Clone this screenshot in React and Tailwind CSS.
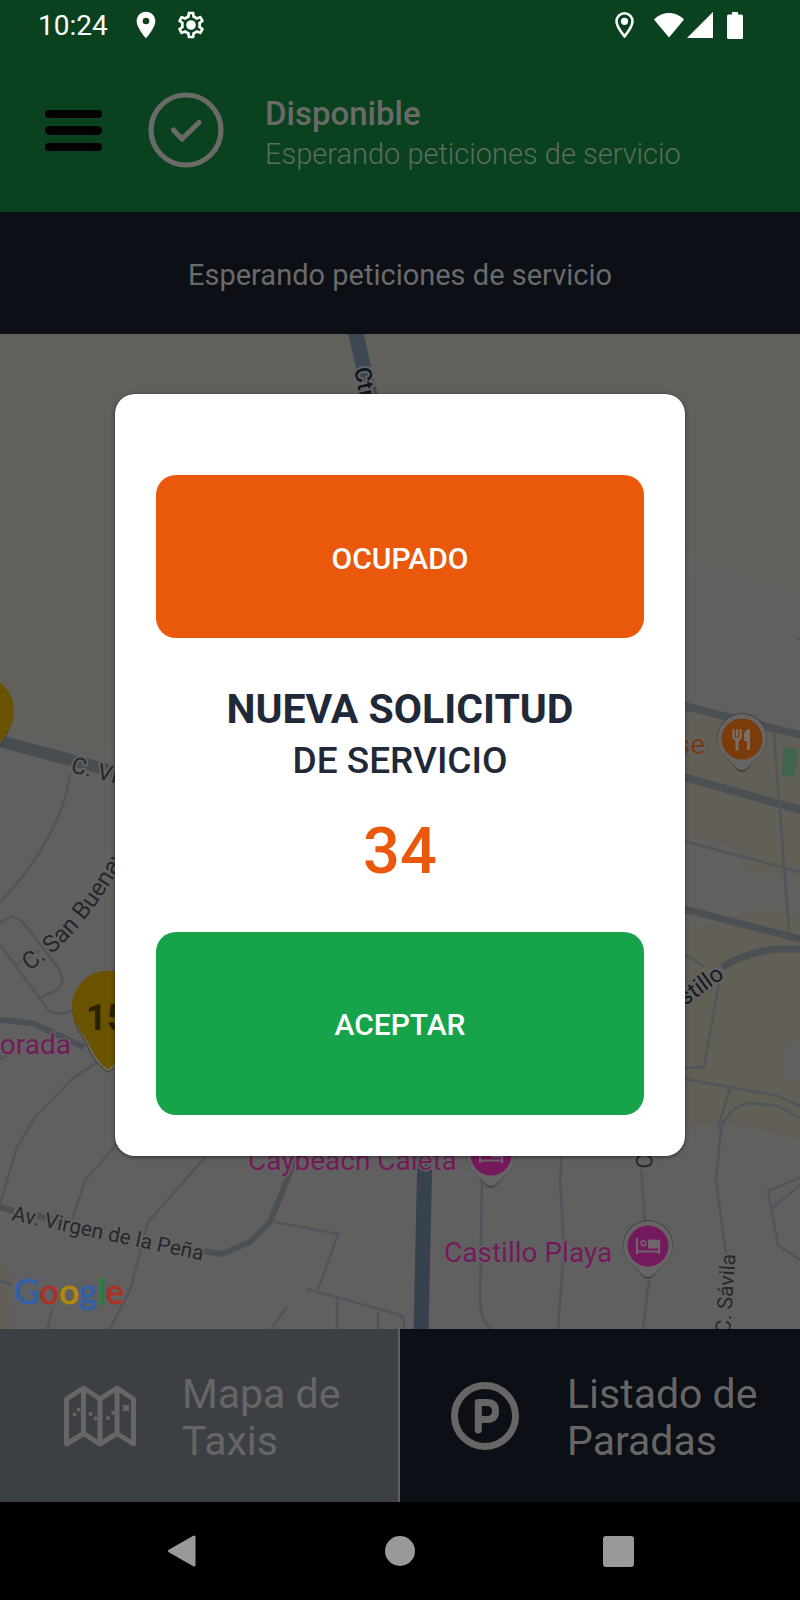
import React from "react";
import { MdLocationOn } from "react-icons/md";

const FONT = "Roboto, 'Noto Sans', sans-serif";

function StatusBar() {
  return (
    <div className="flex h-[50px] items-center justify-between pl-[38px] pr-[57px] text-white">
      <div className="flex items-center">
        <span className="pt-[2px] text-[28px] leading-8">10:24</span>
        <MdLocationOn className="ml-[22px] size-8" aria-hidden="true" />
        <svg viewBox="0 0 24 24" className="ml-[13px] size-8 fill-white" aria-hidden="true">
          <path d="M19.43 12.98c.04-.32.07-.64.07-.98 0-.34-.03-.66-.07-.98l2.11-1.65c.19-.15.24-.42.12-.64l-2-3.46c-.09-.16-.26-.25-.44-.25-.06 0-.12.01-.17.03l-2.49 1c-.52-.4-1.08-.73-1.69-.98l-.38-2.65C14.46 2.18 14.25 2 14 2h-4c-.25 0-.46.18-.49.42l-.38 2.65c-.61.25-1.17.59-1.69.98l-2.49-1c-.06-.02-.12-.03-.18-.03-.17 0-.34.09-.43.25l-2 3.46c-.13.22-.07.49.12.64l2.11 1.65c-.04.32-.07.65-.07.98 0 .33.03.66.07.98l-2.11 1.65c-.19.15-.24.42-.12.64l2 3.46c.09.16.26.25.44.25.06 0 .12-.01.17-.03l2.49-1c.52.4 1.08.73 1.69.98l.38 2.65c.03.24.24.42.49.42h4c.25 0 .46-.18.49-.42l.38-2.65c.61-.25 1.17-.59 1.69-.98l2.49 1c.06.02.12.03.18.03.17 0 .34-.09.43-.25l2-3.46c.12-.22.07-.49-.12-.64l-2.11-1.65zm-1.98-1.71c.04.31.05.52.05.73 0 .21-.02.43-.05.73l-.14 1.13.89.7 1.08.84-.7 1.21-1.27-.51-1.04-.42-.9.68c-.43.32-.84.56-1.25.73l-1.06.43-.16 1.13-.2 1.35h-1.4l-.19-1.35-.16-1.13-1.06-.43c-.43-.18-.83-.41-1.23-.71l-.91-.7-1.06.43-1.27.51-.7-1.21 1.08-.84.89-.7-.14-1.13c-.03-.31-.05-.54-.05-.74s.02-.43.05-.73l.14-1.13-.89-.7-1.08-.84.7-1.21 1.27.51 1.04.42.9-.68c.43-.32.84-.56 1.25-.73l1.06-.43.16-1.13.2-1.35h1.39l.19 1.35.16 1.13 1.06.43c.43.18.83.41 1.23.71l.91.7 1.06-.43 1.27-.51.7 1.21-1.07.85-.89.7.14 1.13z" />
          <circle cx="12" cy="12" r="3.6" />
        </svg>
      </div>
      <div className="flex items-center" aria-hidden="true">
        <svg viewBox="0 0 19 26" className="h-[26px] w-[19px]">
          <path d="M9.500 1.300a8 8 0 0 0-8 8c0 5.500 8 15 8 15s8-9.500 8-15a8 8 0 0 0-8-8z" fill="none" stroke="#fff" strokeWidth="2.600" />
          <circle cx="9.500" cy="9.300" r="3.600" fill="#fff" />
        </svg>
        <svg viewBox="0 0 30 26" className="ml-5 h-[26px] w-[30px]">
          <path d="M15 25.500L0 7.500C4 3.500 9 1 15 1s11 2.500 15 6.500z" fill="#fff" />
        </svg>
        <svg viewBox="0 0 26 26" className="ml-[3px] h-[26px] w-[26px]">
          <path d="M0 26L26 0v26z" fill="#fff" />
        </svg>
        <svg viewBox="0 0 16 27" className="ml-[14px] h-[27px] w-4">
          <path d="M5 0h6v2.500h3.500q1.500 0 1.500 1.500v21.500q0 1.500-1.500 1.500h-13Q0 27 0 25.500V4q0-1.500 1.500-1.500H5z" fill="#fff" />
        </svg>
      </div>
    </div>
  );
}

function Header() {
  return (
    <header className="bg-[#0a411e]">
      <StatusBar />
      <div className="flex h-[162px] items-center pb-[2px] pl-[45px] text-[#6a6b68]">
        <button type="button" aria-label="Menú" className="flex w-[57px] flex-col gap-2">
          <span className="h-[8px] rounded-full bg-black" />
          <span className="h-[9px] rounded-full bg-black" />
          <span className="h-[8px] rounded-full bg-black" />
        </button>
        <svg viewBox="0 0 76 76" className="ml-[46px] size-[76px]" fill="none" stroke="#6a6b68" strokeWidth="5.200" aria-hidden="true">
          <circle cx="38" cy="38" r="35" />
          <path d="M25.500 38l8.500 9 17-16.500" strokeLinecap="round" strokeLinejoin="round" />
        </svg>
        <div className="ml-[41px] pt-2">
          <h1 className="text-[33px] font-medium leading-10">Disponible</h1>
          <p className="text-[29px] font-light leading-10 text-[#5b6d5f]">Esperando peticiones de servicio</p>
        </div>
      </div>
    </header>
  );
}

function PlacePin({ x, y, color, children }) {
  return (
    <g transform={`translate(${x} ${y})`}>
      <path d="M0 33c-4 0-6-3-9-7l-11-12a25 25 0 1 1 40 0L9 26c-3 4-5 7-9 7z" fill="#2e2e2e" opacity=".6" />
      <path d="M0 31c-4 0-6-3-9-6l-10-10a24.500 24.500 0 1 1 38 0L9 25c-3 3-5 6-9 6z" fill="#666564" />
      <circle r="20.500" fill={color} />
      {children}
    </g>
  );
}

function Bed() {
  return (
    <g fill="#6f656d">
      <path d="M-12-8h2V4.500H10V-6.500h2.200V8H10V6.500H-10V8h-2z" />
      <circle cx="-4.500" cy="-2.800" r="2.400" fill="none" stroke="#6f656d" strokeWidth="1.600" />
      <path d="M0-6.500h6q5 0 5 5v4H0z" />
    </g>
  );
}

function TaxiPin({ x, y }) {
  return (
    <g transform={`translate(${x} ${y})`}>
      <path d="M0 65c-9-5-16-15-21-27-5-10-14-19-14-37h70c0 18-9 27-14 37-5 12-12 22-21 27z" fill="#6e6a55" stroke="#3c3a34" />
      <path d="M0 62c-8-5-14-14-19-25-5-10-17-19-17-37a36.500 36.500 0 1 1 73 0c0 18-12 27-17 37-5 11-12 20-20 25z" fill="#6a5300" />
    </g>
  );
}

function MapView() {
  return (
    <svg viewBox="0 334 800 995" preserveAspectRatio="xMidYMid slice" className="absolute inset-0 size-full" role="img" aria-label="Mapa" fontFamily={FONT}>
      <defs>
        <filter id="soft" x="-20%" y="-20%" width="140%" height="140%">
          <feGaussianBlur stdDeviation="6" />
        </filter>
        <path id="buenav" d="M29 971Q82 938 130 850" />
      </defs>
      <rect y="334" width="800" height="995" fill="#62605b" />
      <g filter="url(#soft)">
        <path d="M-40 722L115 755 400 640 640 550 690 561 840 603V1370H-40z" fill="#616161" />
        <path d="M680 708L840 750V1150L740 1126H680z" fill="#625f57" />
        <path d="M680 835L742 850 744 872 850 880V922L760 908 680 930z" fill="#616161" />
        <circle cx="803" cy="1062" r="20" fill="#616164" />
      </g>
      <path d="M0 1265h12v64H0z" fill="#625f59" />

      <g fill="none" stroke="#4b5055" strokeLinejoin="round">
        <path d="M355 330L372 404" stroke="#3c4752" strokeWidth="15" />
        <path d="M425 1150L421 1332" stroke="#36424e" strokeWidth="15" />
        <path d="M-5 740L120 773" stroke="#484d51" strokeWidth="12" />
        <path d="M0 1020L32 1023 84 1047M-4 1206L14 1211M36 1215L60 1222M202 1251L222 1254 250 1242 270 1222 295 1160" strokeWidth="6" />
        <path d="M680 705L804 736M680 776L804 811" strokeWidth="8" />
        <path d="M680 908L804 940M804 949H775Q745 953 722 967" strokeWidth="7" />
      </g>
      <g fill="none" stroke="#50545b" strokeWidth="2.500" strokeLinejoin="round">
        <path d="M70 774C64 822 30 872 0 902" />
        <path d="M0 923L12 916 22 921 60 970 63 982 57 990 40 998M0 945L50 1012 62 1014 72 1010M15 966L40 950" />
        <path d="M98 1062L73 1078 36 1116 17 1147 0 1204M120 1141L85 1180 72 1220M208 1154L148 1222 130 1290 110 1329M75 1078L96 1063M0 1059L14 1052" />
        <path d="M270 1221L338 1234 318 1290M307 1289L404 1316M337 1299V1329M378 1312V1329M271 1329L287 1307M52 1310L47 1329M0 1281L12 1285M398 1315L404 1319V1329" />
        <path d="M482 1180L480 1300Q480 1322 492 1329M562 1150L560 1180 564 1250 558 1329M641 1168L645 1222M649 1280L643 1329" />
        <path d="M718 1128L730 1088M726 1255L716 1180 721 1128Q730 1106 750 1103L778 1106 804 1120M680 1078L778 1096 804 1108" />
        <path d="M804 1176L768 1191 778 1245 804 1262M772 1208L804 1182" />
        <path d="M680 840L804 873M774 732L789 931M685 954L705 967M719 982L704 1067 685 1068M796 639h6" />
      </g>
      <path d="M784 747L798 749 795 777 781 776z" fill="#3f6450" />

      <g fontSize="23" fill="#25282d" stroke="#626262" strokeWidth="4" paintOrder="stroke" strokeLinejoin="round">
        <text transform="translate(354 369) rotate(78)" fill="#11161f" fontWeight="500">Ctra.</text>
        <text transform="translate(70 772) rotate(14)">C. Virgen</text>
        <text fontSize="24"><textPath href="#buenav">C. San Buenav</textPath></text>
        <text transform="translate(11 1220) rotate(12)" fontSize="21">Av. Virgen de la Peña</text>
        <text transform="translate(725 977) rotate(-36)" textAnchor="end" fill="#151a20">Castillo</text>
        <text transform="translate(652 1169) rotate(-88)">C.</text>
        <text transform="translate(730 1334) rotate(-86)" fontSize="21">C. Sávila</text>
      </g>

      <TaxiPin x={-23} y={711} />
      <TaxiPin x={108} y={1007} />
      <text x="86" y="1030" fontSize="36" fontWeight="700" fill="#2b2200">15</text>

      <g fontSize="28" fill="#741a5c" stroke="#626262" strokeWidth="3" paintOrder="stroke">
        <text x="71" y="1054" textAnchor="end">orada</text>
        <text x="248" y="1170">Caybeach Caleta</text>
        <text x="444" y="1262">Castillo Playa</text>
        <text x="705" y="754" textAnchor="end" fill="#7a3a10">se</text>
      </g>
      <PlacePin x={491} y={1155} color="#741a5c"><Bed /></PlacePin>
      <PlacePin x={648} y={1246} color="#741a5c"><Bed /></PlacePin>
      <PlacePin x={742} y={739} color="#7c3b0b">
        <g fill="none" stroke="#77706a" strokeWidth="2.200" strokeLinecap="round">
          <path d="M-8.500-9V-3M-5-9V-3M-1.500-9V-3" />
          <path d="M-8.500-3Q-8.500 1-5 1T-1.500-3" />
          <path d="M-5 0V10" strokeWidth="3" />
        </g>
        <path d="M8-10V11H5V2H2V-4Q2-9 8-10z" fill="#77706a" />
      </PlacePin>

      <text x="14" y="1304" fontFamily="Lato, sans-serif" fontWeight="400" fontSize="35" strokeWidth="1" paintOrder="stroke">
        <tspan fill="#3360a8" stroke="#3360a8">G</tspan>
        <tspan fill="#a83228" stroke="#a83228">o</tspan>
        <tspan fill="#b08a0c" stroke="#b08a0c">o</tspan>
        <tspan fill="#3360a8" stroke="#3360a8">g</tspan>
        <tspan fill="#26803c" stroke="#26803c">l</tspan>
        <tspan fill="#a83228" stroke="#a83228">e</tspan>
      </text>
    </svg>
  );
}

function BottomTabs() {
  return (
    <div className="grid h-[173px] grid-cols-2 text-[41px] leading-[47px] text-[#666]">
      <button type="button" className="flex items-center border-r-2 border-[#5c5e60] bg-[#3c4045] pl-16 text-left">
        <svg viewBox="0 0 72 62" className="h-[62px] w-[72px] shrink-0" fill="none" stroke="#666" strokeWidth="5" strokeLinejoin="round" aria-hidden="true">
          <path d="M2.500 14L19.500 3 36 14 53 3 69.500 14V59L53 48.500 36 59 19.500 48.500 2.500 59zM19.500 3V48.500M36 14V59M53 3V48.500" />
          <path d="M10.500 29.500h.1M14.500 24.500h.1M26.500 29h.1M31.500 33.500h.1M44 33h.1M49 28h.1" strokeWidth="4" strokeLinecap="round" />
          <path d="M59 23h6" strokeWidth="6" />
        </svg>
        <span className="ml-[46px] w-44 pt-1">Mapa de Taxis</span>
      </button>
      <button type="button" className="flex items-center bg-[#0c0f15] pl-[51px] text-left">
        <svg viewBox="0 0 68 68" className="size-[68px] shrink-0" fill="none" stroke="#666" strokeWidth="7" aria-hidden="true">
          <circle cx="34" cy="34" r="30.500" />
          <path d="M27.300 48V20.500H36Q44.500 20.500 44.500 29T36 37.500H27.300" strokeLinecap="round" strokeLinejoin="round" />
        </svg>
        <span className="ml-[48px] w-52 pt-1">Listado de Paradas</span>
      </button>
    </div>
  );
}

function SystemNav() {
  return (
    <nav className="flex h-[98px] items-center justify-center gap-[188px] bg-black">
      <button type="button" aria-label="Atrás">
        <svg viewBox="0 0 30 34" className="h-[34px] w-[30px]" aria-hidden="true">
          <path d="M2.500 17L27 3v28z" fill="#999" stroke="#999" strokeWidth="3" strokeLinejoin="round" />
        </svg>
      </button>
      <button type="button" aria-label="Inicio" className="size-[30px] rounded-full bg-[#999]" />
      <button type="button" aria-label="Recientes" className="size-[31px] rounded-[3px] bg-[#999]" />
    </nav>
  );
}

function RequestDialog() {
  return (
    <div className="absolute inset-0 flex items-center justify-center pb-[50px]">
      <section
        role="dialog"
        aria-modal="true"
        aria-labelledby="request-title"
        className="flex w-full max-w-[570px] flex-col rounded-[20px] bg-white px-[41px] pb-[41px] pt-[81px] text-center text-[#1f2937] shadow-[0_1px_4px_rgba(0,0,0,0.5)]"
      >
        <button type="button" className="h-[163px] rounded-[20px] bg-[#ea580c] pt-1 text-[30px] font-medium text-white">OCUPADO</button>
        <h2 id="request-title" className="mt-[45px]">
          <span className="block text-[41px] font-bold leading-[52px]">NUEVA SOLICITUD</span>
          <span className="block text-[37px] font-medium leading-[52px]">DE SERVICIO</span>
        </h2>
        <p className="mt-7 text-[65px] font-medium leading-[72px] text-[#ea580c]">34</p>
        <button type="button" className="mt-[45px] h-[183px] rounded-[20px] bg-[#16a34a] pt-[2px] text-[30px] font-medium text-white">ACEPTAR</button>
      </section>
    </div>
  );
}

export default function App() {
  return (
    <div className="relative flex min-h-screen flex-col bg-black font-[Roboto,'Noto_Sans',sans-serif]">
      <Header />
      <p className="bg-[#0c0f15] pb-[37px] pt-[41px] text-center text-[29px] leading-[44px] text-[#6a6a6b]">
        Esperando peticiones de servicio
      </p>
      <main className="relative min-h-[800px] flex-1 overflow-hidden">
        <MapView />
      </main>
      <BottomTabs />
      <SystemNav />
      <RequestDialog />
    </div>
  );
}
